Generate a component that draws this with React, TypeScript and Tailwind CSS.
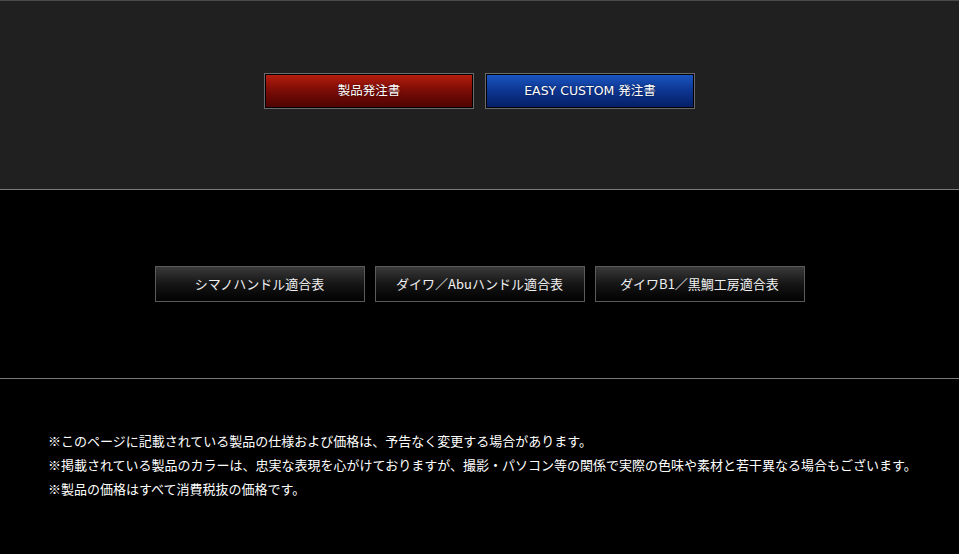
const font = { fontFamily: '"Noto Sans CJK JP", "Noto Sans", sans-serif' };

function OrderButton({ label, tone }: { label: string; tone: "red" | "blue" }) {
  const grad =
    tone === "red"
      ? "bg-gradient-to-b from-[#b41d0d] via-[#7a0c06] to-[#4e0402]"
      : "bg-gradient-to-b from-[#1a55c0] via-[#0d3590] to-[#061f66]";
  return (
    <a
      href="#"
      className="block h-[36px] w-[210px] border border-[#6a6a6a] bg-black p-px"
    >
      <span
        className={`flex h-full w-full items-center justify-center font-['DejaVu_Sans','Noto_Sans_CJK_JP',sans-serif] text-[12.5px] text-white [text-shadow:0_0_2px_rgba(0,0,0,0.6)] ${grad}`}
      >
        {label}
      </span>
    </a>
  );
}

function ChartButton({ label }: { label: string }) {
  return (
    <a
      href="#"
      className="flex h-[36px] w-[210px] items-center justify-center border border-[#5a5a5a] bg-gradient-to-b from-[#3a3a3a] via-[#161616] to-[#030303] text-[13px] text-[#f0f0f0]"
    >
      {label}
    </a>
  );
}

export default function App() {
  return (
    <div className="min-h-[554px] w-full bg-black" style={font}>
      <section className="h-[190px] border-t border-b border-t-[#4a4a4a] border-b-[#7a7a7a] bg-[#202020] pt-[72px]">
        <div className="flex justify-center gap-[11px]">
          <OrderButton label="製品発注書" tone="red" />
          <OrderButton label="EASY CUSTOM 発注書" tone="blue" />
        </div>
      </section>
      <section className="flex h-[189px] items-center justify-center gap-[10px] border-b border-[#7a7a7a]">
        <ChartButton label="シマノハンドル適合表" />
        <ChartButton label="ダイワ／Abuハンドル適合表" />
        <ChartButton label="ダイワB1／黒鯛工房適合表" />
      </section>
      <section className="px-[48px] pt-[50px] pb-[50px] text-[13px] leading-[24px] whitespace-nowrap text-white">
        <p>※このページに記載されている製品の仕様および価格は、予告なく変更する場合があります。</p>
        <p>※掲載されている製品のカラーは、忠実な表現を心がけておりますが、撮影・パソコン等の関係で実際の色味や素材と若干異なる場合もございます。</p>
        <p>※製品の価格はすべて消費税抜の価格です。</p>
      </section>
    </div>
  );
}
